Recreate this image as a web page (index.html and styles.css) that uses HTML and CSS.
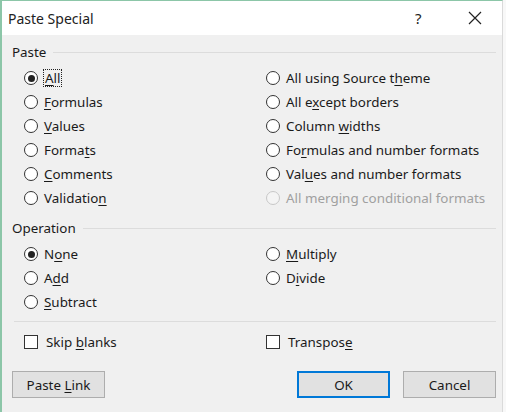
FILE: index.html
```html
<!DOCTYPE html>
<html>
<head>
<meta charset="utf-8">
<link rel="stylesheet" href="styles.css">
</head>
<body>
<div class="window">
  <div class="titlebar">
    <span class="title">Paste Special</span>
    <span class="help">?</span>
    <span class="close">
      <svg width="14" height="14" viewBox="0 0 14 14"><path d="M1 1 L13 13 M13 1 L1 13" stroke="#222" stroke-width="1.2" fill="none"/></svg>
    </span>
  </div>
  <div class="content">
    <div class="group-head"><span>Paste</span><div class="rule"></div></div>
    <div class="grid paste-grid">
      <div class="opt"><span class="radio checked"></span><span class="lbl focus"><u>A</u>ll</span></div>
      <div class="opt"><span class="radio"></span><span class="lbl">All using Source t<u>h</u>eme</span></div>
      <div class="opt"><span class="radio"></span><span class="lbl"><u>F</u>ormulas</span></div>
      <div class="opt"><span class="radio"></span><span class="lbl">All e<u>x</u>cept borders</span></div>
      <div class="opt"><span class="radio"></span><span class="lbl"><u>V</u>alues</span></div>
      <div class="opt"><span class="radio"></span><span class="lbl">Column <u>w</u>idths</span></div>
      <div class="opt"><span class="radio"></span><span class="lbl">Forma<u>t</u>s</span></div>
      <div class="opt"><span class="radio"></span><span class="lbl">Fo<u>r</u>mulas and number formats</span></div>
      <div class="opt"><span class="radio"></span><span class="lbl"><u>C</u>omments</span></div>
      <div class="opt"><span class="radio"></span><span class="lbl">Val<u>u</u>es and number formats</span></div>
      <div class="opt"><span class="radio"></span><span class="lbl">Validatio<u>n</u></span></div>
      <div class="opt disabled"><span class="radio"></span><span class="lbl">All merging conditional formats</span></div>
    </div>
    <div class="group-head op-head"><span>Operation</span><div class="rule"></div></div>
    <div class="grid op-grid">
      <div class="opt"><span class="radio checked"></span><span class="lbl">N<u>o</u>ne</span></div>
      <div class="opt"><span class="radio"></span><span class="lbl"><u>M</u>ultiply</span></div>
      <div class="opt"><span class="radio"></span><span class="lbl">A<u>d</u>d</span></div>
      <div class="opt"><span class="radio"></span><span class="lbl">D<u>i</u>vide</span></div>
      <div class="opt"><span class="radio"></span><span class="lbl"><u>S</u>ubtract</span></div>
      <div class="opt"></div>
    </div>
    <div class="sep"></div>
    <div class="grid check-grid">
      <div class="opt"><span class="check"></span><span class="lbl">Skip <u>b</u>lanks</span></div>
      <div class="opt"><span class="check"></span><span class="lbl">Transpos<u>e</u></span></div>
    </div>
    <div class="buttons">
      <button class="btn">Paste <u>L</u>ink</button>
      <div class="spacer"></div>
      <button class="btn default">OK</button>
      <button class="btn">Cancel</button>
    </div>
  </div>
</div>
</body>
</html>
```

FILE: styles.css
```css
html, body {
  margin: 0;
  padding: 0;
  background: #f8f8f8;
  width: 506px;
  height: 412px;
  overflow: hidden;
}
body {
  font-family: "Noto Sans", "Open Sans", "Liberation Sans", sans-serif;
  font-size: 13.4px;
  color: #1a1a1a;
}
.window {
  width: 500px;
  height: 411px;
  border-top: 1px solid #8cc6a8;
  border-left: 2px solid #8cc6a8;
  border-right: 1px solid #dadada;
  background: #f0f0f0;
  display: flex;
  flex-direction: column;
}
.titlebar {
  height: 34px;
  background: #ffffff;
  display: flex;
  align-items: center;
  padding-left: 6px;
}
.title {
  font-size: 14px;
  color: #222;
  flex: 1;
}
.help {
  font-size: 15px;
  width: 14px;
  margin-right: 39px;
  color: #222;
}
.close {
  display: flex;
  margin-right: 20px;
}
.content {
  padding: 8px 0 0 10px;
  display: flex;
  flex-direction: column;
}
.group-head {
  display: flex;
  align-items: center;
  height: 18px;
  margin-right: 6px;
}
.group-head span {
  margin-right: 7px;
}
.rule {
  flex: 1;
  border-top: 1px solid #dcdcdc;
}
.grid {
  display: grid;
  grid-template-columns: 242px 1fr;
  padding-left: 12px;
}
.paste-grid {
  margin-top: 5px;
}
.op-head {
  margin-top: 9px;
}
.op-grid {
  margin-top: 5px;
}
.opt {
  height: 24px;
  display: flex;
  align-items: center;
}
.radio {
  width: 12px;
  height: 12px;
  border: 1.5px solid #333;
  border-radius: 50%;
  background: #fff;
  position: relative;
  flex: none;
  margin-right: 6px;
}
.radio.checked::after {
  content: "";
  position: absolute;
  left: 2.5px;
  top: 2.5px;
  width: 7px;
  height: 7px;
  border-radius: 50%;
  background: #222;
}
.lbl {
  white-space: nowrap;
}
.lbl u {
  text-decoration: underline;
  text-underline-offset: 2px;
}
.focus {
  outline: 1px dotted #222;
  outline-offset: 0px;
  padding: 0 1px;
  line-height: 16px;
}
.disabled .radio {
  border-color: #c8c8c8;
  background: #f4f4f4;
}
.disabled .lbl {
  color: #a0a0a0;
}
.sep {
  border-top: 1px solid #dcdcdc;
  margin: 7px 6px 0 2px;
}
.check-grid {
  margin-top: 8px;
}
.check {
  width: 12px;
  height: 12px;
  border: 1px solid #333;
  background: #fff;
  flex: none;
  margin: 0 8px 0 0;
}
.buttons {
  display: flex;
  margin-top: 17px;
  padding-right: 6px;
}
.spacer {
  flex: 1;
}
.btn {
  font-family: inherit;
  font-size: 13.4px;
  color: #1a1a1a;
  width: 93px;
  height: 27px;
  background: #e1e1e1;
  border: 1px solid #adadad;
  padding: 0;
}
.btn.default {
  border: 2px solid #0078d7;
  margin-right: 13px;
}
.btn u {
  text-underline-offset: 2px;
}
```
